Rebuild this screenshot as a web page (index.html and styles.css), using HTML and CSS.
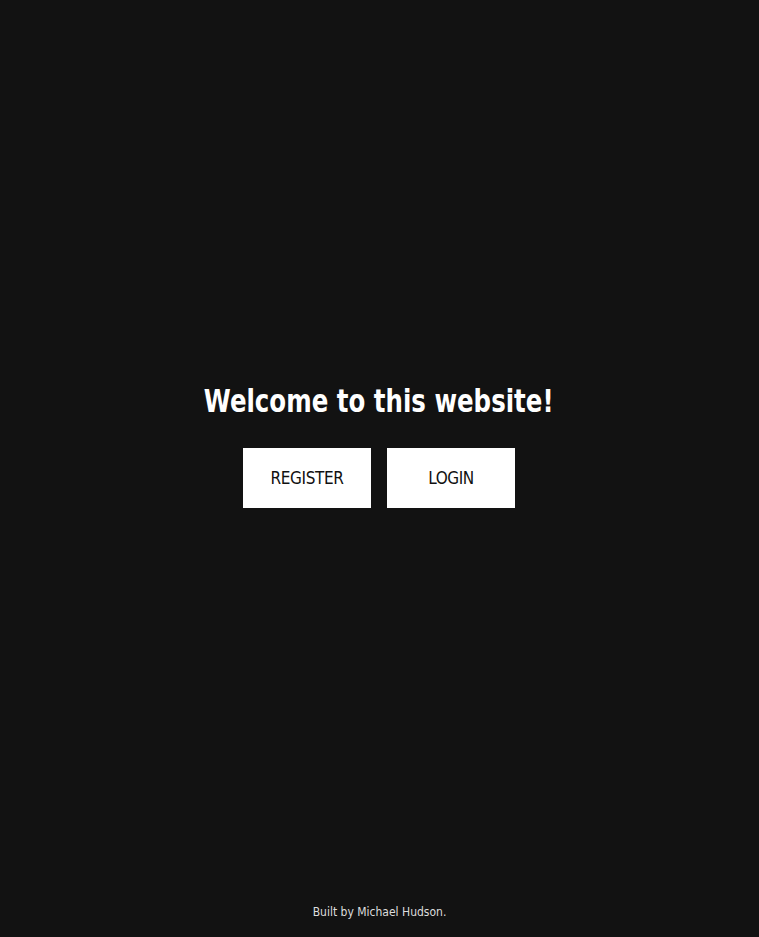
FILE: index.html
```html
<!DOCTYPE html>
<html lang="en">
<head>
<meta charset="utf-8">
<title>Welcome</title>
<link rel="stylesheet" href="styles.css">
</head>
<body>
<div class="page">
  <main class="hero">
    <h1 class="title">Welcome to this website!</h1>
    <div class="actions">
      <a class="btn" href="#">REGISTER</a>
      <a class="btn" href="#">LOGIN</a>
    </div>
  </main>
  <footer class="footer">Built by Michael Hudson.</footer>
</div>
</body>
</html>
```

FILE: styles.css
```css
html, body {
  margin: 0;
  padding: 0;
  background: #121212;
  height: 100%;
}
body {
  font-family: "DejaVu Sans Condensed", "Liberation Sans", sans-serif;
  color: #fff;
}
.page {
  min-height: 100%;
  display: flex;
  flex-direction: column;
}
.hero {
  flex: 1;
  display: flex;
  flex-direction: column;
  align-items: center;
  justify-content: center;
  padding: 0 1px 16px 0;
}
.title {
  margin: 0 0 27px;
  font-size: 32px;
  font-weight: bold;
  line-height: 40px;
  transform: scaleX(0.85);
}
.actions {
  display: flex;
  gap: 16px;
}
.btn {
  width: 128px;
  height: 60px;
  display: flex;
  align-items: center;
  justify-content: center;
  background: #fff;
  color: #111;
  text-decoration: none;
  font-size: 17px;
  letter-spacing: -0.4px;
}
.footer {
  text-align: center;
  font-size: 12px;
  color: #ddd;
  padding: 0 0 18px;
  line-height: 14px;
}
```
